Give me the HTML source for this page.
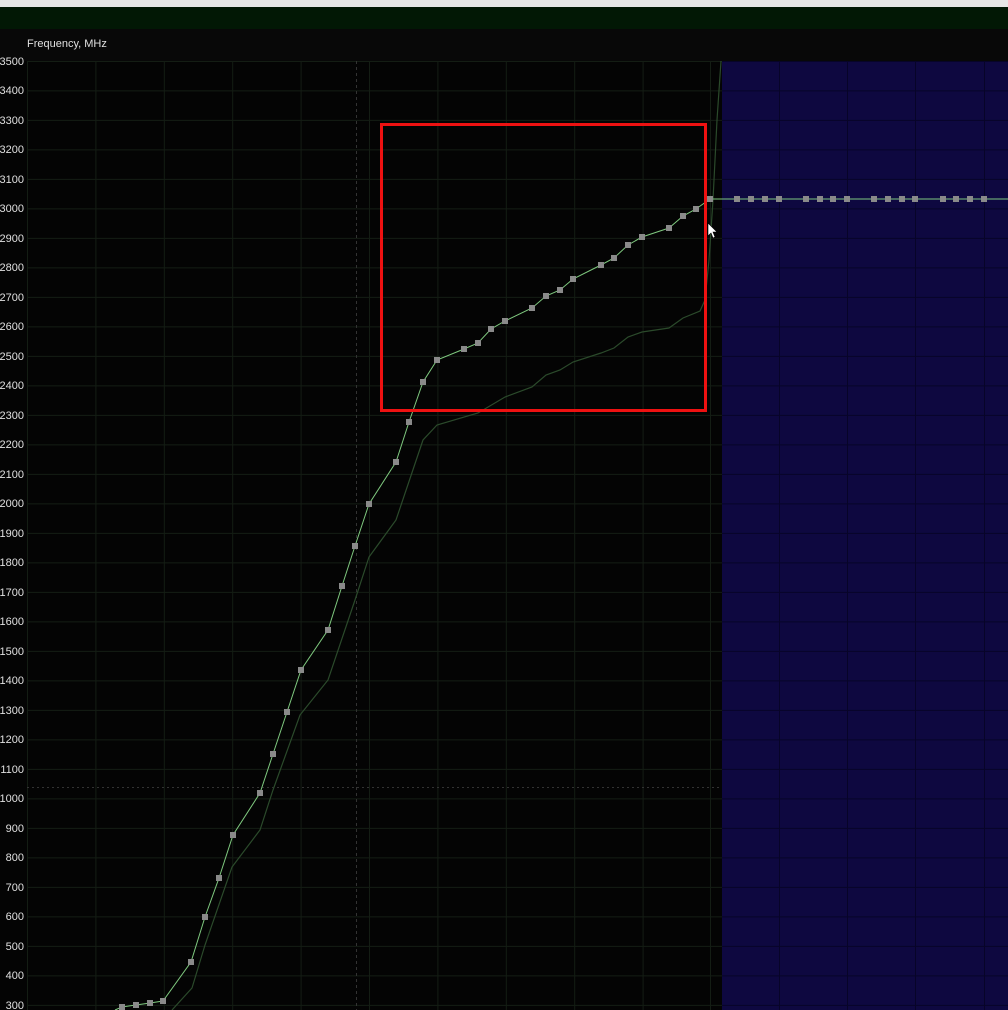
<!DOCTYPE html>
<html><head><meta charset="utf-8"><style>
html,body{margin:0;padding:0;background:#050505;width:1008px;height:1010px;overflow:hidden}
svg{display:block}
text{font-family:"Liberation Sans",sans-serif;font-size:11px;fill:#e0e0e0}
</style></head><body>
<svg width="1008" height="1010" xmlns="http://www.w3.org/2000/svg">
<rect x="0" y="0" width="1008" height="7" fill="#e6e6e6"/>
<rect x="0" y="7" width="1008" height="22" fill="#021805"/>
<rect x="0" y="29" width="1008" height="32" fill="#080808"/>
<rect x="0" y="61" width="1008" height="949" fill="#040404"/>
<rect x="722" y="61" width="286" height="949" fill="#0e0840"/>
<text x="27" y="47">Frequency, MHz</text>
<g stroke="#141d14" stroke-width="1" fill="none">
<path d="M27 61.5H722M27 90.9H722M27 120.4H722M27 149.9H722M27 179.4H722M27 208.9H722M27 238.4H722M27 267.9H722M27 297.4H722M27 326.9H722M27 356.4H722M27 385.9H722M27 415.4H722M27 444.9H722M27 474.4H722M27 503.9H722M27 533.4H722M27 562.9H722M27 592.4H722M27 621.9H722M27 651.4H722M27 680.9H722M27 710.4H722M27 739.9H722M27 769.4H722M27 798.9H722M27 828.4H722M27 857.9H722M27 887.4H722M27 916.9H722M27 946.4H722M27 975.9H722M27 1005.4H722"/>
<path d="M27.5 61V1010M95.9 61V1010M164.3 61V1010M232.7 61V1010M301.1 61V1010M369.5 61V1010M437.9 61V1010M506.3 61V1010M574.7 61V1010M643.1 61V1010M710.5 61V1010"/>
</g>
<g stroke="#070428" stroke-width="1" fill="none">
<path d="M722 61.5H1008M722 90.9H1008M722 120.4H1008M722 149.9H1008M722 179.4H1008M722 208.9H1008M722 238.4H1008M722 267.9H1008M722 297.4H1008M722 326.9H1008M722 356.4H1008M722 385.9H1008M722 415.4H1008M722 444.9H1008M722 474.4H1008M722 503.9H1008M722 533.4H1008M722 562.9H1008M722 592.4H1008M722 621.9H1008M722 651.4H1008M722 680.9H1008M722 710.4H1008M722 739.9H1008M722 769.4H1008M722 798.9H1008M722 828.4H1008M722 857.9H1008M722 887.4H1008M722 916.9H1008M722 946.4H1008M722 975.9H1008M722 1005.4H1008"/>
<path d="M779.5 61V1010M847.5 61V1010M915.5 61V1010M984.5 61V1010"/>
</g>
<path d="M27 787.5H722" stroke="#333" stroke-dasharray="2 3"/>
<path d="M356.5 61V1010" stroke="#333" stroke-dasharray="3 3"/>
<g font-size="11" text-anchor="end">
<text x="24" y="65">3500</text><text x="24" y="94">3400</text><text x="24" y="124">3300</text><text x="24" y="153">3200</text><text x="24" y="183">3100</text><text x="24" y="212">3000</text><text x="24" y="242">2900</text><text x="24" y="271">2800</text><text x="24" y="301">2700</text><text x="24" y="330">2600</text><text x="24" y="360">2500</text><text x="24" y="389">2400</text><text x="24" y="419">2300</text><text x="24" y="448">2200</text><text x="24" y="478">2100</text><text x="24" y="507">2000</text><text x="24" y="537">1900</text><text x="24" y="566">1800</text><text x="24" y="596">1700</text><text x="24" y="625">1600</text><text x="24" y="655">1500</text><text x="24" y="684">1400</text><text x="24" y="714">1300</text><text x="24" y="743">1200</text><text x="24" y="773">1100</text><text x="24" y="802">1000</text><text x="24" y="832">900</text><text x="24" y="861">800</text><text x="24" y="891">700</text><text x="24" y="920">600</text><text x="24" y="950">500</text><text x="24" y="979">400</text><text x="24" y="1009">300</text>
</g>
<polyline fill="none" stroke="#2b4a2b" stroke-width="1.2" points="172,1010 192,988 205,945 232,867 260,830 273,790 300,715 328,680 355,600 369,557 396,520 423,440 437,425 478,413 505,397 532,387 546,375 560,370 573,362 601,353 614,348 628,337 642,332 669,328 683,318 700,311 705,300 709,260 713,200 717,120 721,61"/>
<polyline fill="none" stroke="#7fc97f" stroke-width="1" points="115,1010 122,1007 136,1005 150,1003 163,1001 191,962 205,917 219,878 233,835 260,793 273,754 287,712 301,670 328,630 342,586 355,546 369,504 396,462 409,422 423,382 437,360 464,349 478,343 491,329 505,321 532,308 546,296 560,290 573,279 601,265 614,258 628,245 642,237 669,228 683,216 696,209 710,199 1008,199"/>
<g fill="#8a8a8a">
<rect x="119" y="1004" width="6" height="6"/><rect x="133" y="1002" width="6" height="6"/><rect x="147" y="1000" width="6" height="6"/><rect x="160" y="998" width="6" height="6"/><rect x="188" y="959" width="6" height="6"/><rect x="202" y="914" width="6" height="6"/><rect x="216" y="875" width="6" height="6"/><rect x="230" y="832" width="6" height="6"/><rect x="257" y="790" width="6" height="6"/><rect x="270" y="751" width="6" height="6"/><rect x="284" y="709" width="6" height="6"/><rect x="298" y="667" width="6" height="6"/><rect x="325" y="627" width="6" height="6"/><rect x="339" y="583" width="6" height="6"/><rect x="352" y="543" width="6" height="6"/><rect x="366" y="501" width="6" height="6"/><rect x="393" y="459" width="6" height="6"/><rect x="406" y="419" width="6" height="6"/><rect x="420" y="379" width="6" height="6"/><rect x="434" y="357" width="6" height="6"/><rect x="461" y="346" width="6" height="6"/><rect x="475" y="340" width="6" height="6"/><rect x="488" y="326" width="6" height="6"/><rect x="502" y="318" width="6" height="6"/><rect x="529" y="305" width="6" height="6"/><rect x="543" y="293" width="6" height="6"/><rect x="557" y="287" width="6" height="6"/><rect x="570" y="276" width="6" height="6"/><rect x="598" y="262" width="6" height="6"/><rect x="611" y="255" width="6" height="6"/><rect x="625" y="242" width="6" height="6"/><rect x="639" y="234" width="6" height="6"/><rect x="666" y="225" width="6" height="6"/><rect x="680" y="213" width="6" height="6"/><rect x="693" y="206" width="6" height="6"/><rect x="707" y="196" width="6" height="6"/>
<rect x="734" y="196" width="6" height="6"/><rect x="748" y="196" width="6" height="6"/><rect x="762" y="196" width="6" height="6"/><rect x="776" y="196" width="6" height="6"/><rect x="803" y="196" width="6" height="6"/><rect x="817" y="196" width="6" height="6"/><rect x="830" y="196" width="6" height="6"/><rect x="844" y="196" width="6" height="6"/><rect x="871" y="196" width="6" height="6"/><rect x="885" y="196" width="6" height="6"/><rect x="899" y="196" width="6" height="6"/><rect x="912" y="196" width="6" height="6"/><rect x="940" y="196" width="6" height="6"/><rect x="953" y="196" width="6" height="6"/><rect x="967" y="196" width="6" height="6"/><rect x="981" y="196" width="6" height="6"/>
</g>
<rect x="381.5" y="124.5" width="324" height="286" fill="none" stroke="#ee1111" stroke-width="3"/>
<path d="M708 223 L708 236 L711 233 L713 238 L715 237 L713 232 L717 232 Z" fill="#fff" stroke="#000" stroke-width="0.6"/>
</svg>
</body></html>
